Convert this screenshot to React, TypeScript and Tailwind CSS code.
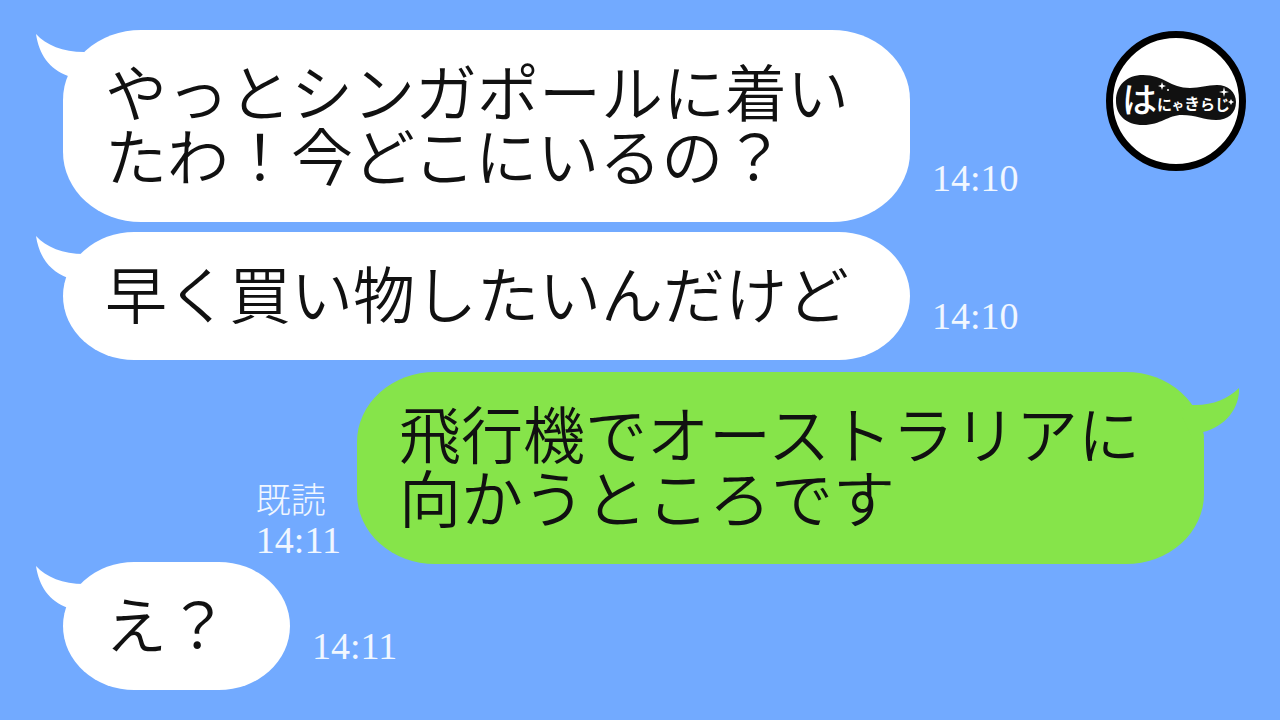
import React from 'react';
import clsx from 'clsx';

interface Message {
    id: number;
    from: 'them' | 'me';
    text: string;
    time: string;
    read?: boolean;
}

const MESSAGES: Message[] = [
    { id: 1, from: 'them', text: 'やっとシンガポールに着いたわ！今どこにいるの？', time: '14:10' },
    { id: 2, from: 'them', text: '早く買い物したいんだけど', time: '14:10' },
    { id: 3, from: 'me', text: '飛行機でオーストラリアに向かうところです', time: '14:11', read: true },
    { id: 4, from: 'them', text: 'え？', time: '14:11' },
];

const LeftTail = () => (
    <svg className="absolute top-1 -left-7 text-white" width="60" height="50" viewBox="0 0 60 50" fill="currentColor" aria-hidden="true">
        <path d="M1 0C11 11 28 18 49 18L60 30L34 50L33 42C14 35 4 20 1 0Z" />
    </svg>
);

const RightTail = () => (
    <svg className="absolute top-4 -right-9 text-[#86e44a]" width="60" height="50" viewBox="0 0 60 50" fill="currentColor" aria-hidden="true">
        <path d="M59 0C48 11 31 18 12 17L0 24L12 50H24L23 44C45 39 60 20 59 0Z" />
    </svg>
);

const Logo = () => (
    <svg className="absolute top-[31px] right-[34px]" width="140" height="140" viewBox="0 0 140 140" role="img" aria-label="はにゃきらじ">
        <circle cx="70" cy="70" r="66.500" fill="#fff" stroke="#000" strokeWidth="7" />
        <path
            d="M10 70C10 54 21 44 37 44C58 44 64 57 84 57C94 57 101 54 111 54C122 54 130 61 130 71C130 82 122 89 110 89C98 89 90 84 76 84C62 84 55 94 37 94C20 94 10 84 10 70Z"
            fill="#111"
        />
        <text x="16" y="82" fill="#fff" className="font-['Noto_Sans_CJK_JP',sans-serif] font-bold">
            <tspan fontSize="35" className="font-medium">は</tspan>
            <tspan fontSize="15" y="79">に</tspan>
            <tspan fontSize="12">ゃ</tspan>
            <tspan fontSize="16">き</tspan>
            <tspan fontSize="15">ら</tspan>
            <tspan fontSize="15">じ</tspan>
        </text>
        <g fill="#fff">
            <path d="M56 51L57 54L60 55L57 56L56 59L55 56L52 55L55 54Z" />
            <path d="M118 56L119 60L123 61L119 62L118 66L117 62L113 61L117 60Z" />
            <path d="M125 68L126 70L128 71L126 72L125 74L124 72L122 71L124 70Z" />
            <circle cx="62" cy="59" r="1" />
        </g>
    </svg>
);

const MessageRow = ({ message }: { message: Message }) => {
    const isMe = message.from === 'me';

    return (
        <li className={clsx('flex items-end', isMe ? 'flex-row-reverse pr-[76px] gap-4 mt-0.5 -mb-3' : 'pl-[63px] gap-[22px]')}>
            <div
                className={clsx(
                    'relative rounded-[78px/70px] pt-7 pb-9 pl-[42px] pr-[61px]',
                    isMe ? 'bg-[#86e44a]' : 'bg-white'
                )}
            >
                {isMe ? <RightTail /> : <LeftTail />}
                <p className="relative max-w-[744px] text-[62px] leading-[64px] font-[350] text-[#111] font-['Noto_Sans_CJK_JP',sans-serif]">
                    {message.text}
                </p>
            </div>
            <div className={clsx('shrink-0 text-white/90', isMe ? 'pb-1' : 'pb-6')}>
                {message.read && (
                    <div className="text-[35px] leading-[44px] font-light font-['Noto_Sans_CJK_JP',sans-serif]">既読</div>
                )}
                <time className="block text-[38px] leading-[40px] font-['Liberation_Serif',serif]">{message.time}</time>
            </div>
        </li>
    );
};

export default function App() {
    return (
        <main lang="ja" className="relative min-h-screen bg-[#72aaff] overflow-hidden">
            <ul className="flex flex-col gap-2.5 pt-[30px]">
                {MESSAGES.map((message) => (
                    <MessageRow key={message.id} message={message} />
                ))}
            </ul>
            <Logo />
        </main>
    );
}
